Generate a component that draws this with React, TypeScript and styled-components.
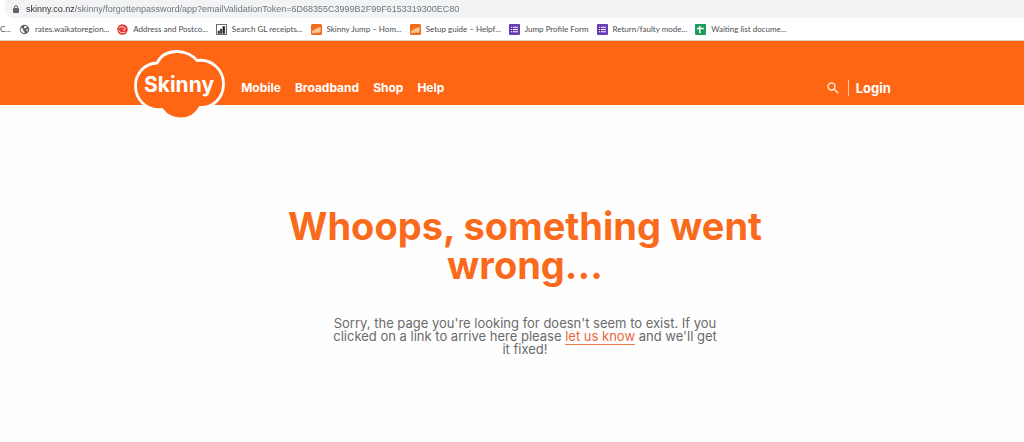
import React from "react";
import styled, { createGlobalStyle } from "styled-components";

const Global = createGlobalStyle`
  * { box-sizing: border-box; }
  body { margin: 0; background: #fefefe; font-family: Inter, "Liberation Sans", sans-serif; }
  a { color: inherit; text-decoration: none; }
  svg { display: block; flex: none; }
`;

const AddressRow = styled.div`
  background: #fff;
  padding-left: 5px;
`;
const AddressBox = styled.label`
  display: flex;
  align-items: center;
  gap: 7px;
  height: 18px;
  padding: 0 8px;
  border-radius: 0 0 0 9px;
  background: #f1f3f4;
  color: #5f6368;
`;
const Url = styled.input`
  flex: 1;
  min-width: 0;
  border: 0;
  padding: 0;
  outline: 0;
  color: #6f7377;
  font: 9px "Liberation Sans", Arial, sans-serif;
  background: linear-gradient(90deg, #27292c 48px, #6a6e72 48px);
  background-clip: text;
  -webkit-text-fill-color: transparent;
`;
const Bookmarks = styled.nav`
  display: flex;
  align-items: center;
  gap: 8px;
  height: 23px;
  overflow: hidden;
  background: #fff;
  border-bottom: 1px solid #e3cfc4;
`;
const Bookmark = styled.a`
  display: flex;
  align-items: center;
  gap: 5px;
  font: 8px Lato, "Noto Sans", sans-serif;
  color: #4a4d51;
  white-space: nowrap;
`;

const Header = styled.header`
  background: #ff6614;
  height: 64px;
`;
const HeaderInner = styled.div`
  display: flex;
  width: 74%;
  margin: 0 auto;
  align-items: flex-start;
  padding-top: 8px;
`;
const Nav = styled.nav`
  display: flex;
  gap: 14px;
  margin-left: 15px;
  padding-top: 31px;
  flex: 1;
`;
const NavLink = styled.a`
  color: #fff;
  font-size: 12px;
  line-height: 16px;
  font-weight: 700;
`;
const Tools = styled.div`
  display: flex;
  align-items: center;
  padding-top: 31px;
`;
const SearchButton = styled.button`
  border: 0;
  padding: 0 9px 0 0;
  background: none;
  color: #ffe6d8;
  display: flex;
`;
const LoginLink = styled(NavLink)`
  border-left: 1px solid #ffc7a6;
  padding-left: 7px;
  font-size: 13px;
`;

const Main = styled.main`
  display: flex;
  flex-direction: column;
  align-items: center;
  padding: 102px 0 80px 26px;
  text-align: center;
`;
const Title = styled.h1`
  margin: 0;
  max-width: 500px;
  color: #fa6a1c;
  font-size: 38px;
  line-height: 39px;
  font-weight: 700;
`;
const Message = styled.p`
  margin: 32px 0 0;
  max-width: 390px;
  color: #6a6a6a;
  font-size: 13px;
  line-height: 13px;
`;
const InlineLink = styled.a`
  color: #e8693a;
  border-bottom: 1px solid #f07a44;
`;

const LockIcon = () => (
  <svg width="6" height="9" viewBox="0 0 6 9" aria-hidden="true">
    <rect y="3" width="6" height="5" rx="1" fill="currentColor" />
    <path d="M1.5 3.5V2.2a1.5 1.5 0 0 1 3 0v1.3" fill="none" stroke="currentColor" />
  </svg>
);

const GlobeIcon = () => (
  <svg width="11" height="11" viewBox="0 0 11 11" aria-hidden="true">
    <circle cx="5.5" cy="5.5" r="4.7" fill="#5f6368" />
    <path d="M2 3.4 4.2 5.2 4 6.6 5.6 8v1.2C3 9 1.6 7.4 1.7 5.2ZM5.2 1.8 8 2.4 7 4 5.3 4.2ZM7 5.6 9.2 5.5 8.2 7.6Z" fill="#fff" />
  </svg>
);

const PostIcon = () => (
  <svg width="11" height="11" viewBox="0 0 11 11" aria-hidden="true">
    <circle cx="5.5" cy="5.5" r="5.2" fill="#e0342f" />
    <path d="M2 4.2C3.6 2.2 7.6 2.3 8.2 4.6 8.5 6.2 6.4 6.6 5.6 5.4M1.6 6.2C2.6 8.6 5.6 9.4 8.4 8" fill="none" stroke="#fff" />
  </svg>
);

const ChartIcon = () => (
  <svg width="11" height="11" viewBox="0 0 11 11" aria-hidden="true">
    <rect x=".5" y=".5" width="10" height="10" fill="#fff" stroke="#6b6b6b" />
    <path d="M2 9.5V7h1.5v2.5ZM4.3 9.5V5h1.5v4.5ZM6.8 9.5V2.5h2v7Z" fill="#222" stroke="#222" strokeWidth=".4" />
  </svg>
);

const JumpIcon = () => (
  <svg width="11" height="11" viewBox="0 0 11 11" aria-hidden="true">
    <rect width="11" height="11" rx="1.5" fill="#ee6c1c" />
    <path d="M1 6.8C3.5 6.6 4.2 3.6 9.8 3.2L9.4 8.4 1.2 9.2Z" fill="#ffc58e" />
  </svg>
);

const FormIcon = () => (
  <svg width="11" height="11" viewBox="0 0 11 11" aria-hidden="true">
    <rect width="11" height="11" rx="1" fill="#673ab7" />
    <path d="M2 3.2h1.2M4 3.2h5M2 5.5h1.2M4 5.5h5M2 7.8h1.2M4 7.8h5" stroke="#fff" strokeWidth="1.1" />
  </svg>
);

const SheetIcon = () => (
  <svg width="11" height="11" viewBox="0 0 11 11" aria-hidden="true">
    <rect width="11" height="11" rx="1" fill="#1e9e5a" />
    <path d="M2 4.5h7M4.8 2v7.2" stroke="#fff" strokeWidth="1.4" />
  </svg>
);

const SearchIcon = () => (
  <svg width="12" height="12" viewBox="0 0 12 12" aria-hidden="true">
    <circle cx="4.5" cy="4.5" r="3.5" fill="none" stroke="currentColor" strokeWidth="1.4" />
    <path d="m7.2 7.2 4 4" stroke="currentColor" strokeWidth="1.6" />
  </svg>
);

const Logo = () => (
  <svg width="93" height="71" viewBox="133 49 93 71" role="img" aria-label="Skinny">
    <path
      d="M157 63C161 55 169 51.5 177 51.5C185 51.5 193 55 197 60.5C212 58.5 223.5 70 223.5 84C223.5 97 214 108 200 107.5C196 115 189 119 181 119C173 119 166 115 162 109.5C146 111 135.5 99 135.5 86C135.5 73 145 63.5 157 63Z"
      fill="#ff6614"
      stroke="#fefefe"
      strokeWidth="2.8"
      strokeLinejoin="round"
    />
    <text x="179" y="92" textAnchor="middle" fill="#fff" fontSize="21" fontWeight="700">
      Skinny
    </text>
  </svg>
);

const bookmarks: { label: string; Icon?: React.FC }[] = [
  { label: "C..." },
  { label: "rates.waikatoregion...", Icon: GlobeIcon },
  { label: "Address and Postco...", Icon: PostIcon },
  { label: "Search GL receipts...", Icon: ChartIcon },
  { label: "Skinny Jump – Hom...", Icon: JumpIcon },
  { label: "Setup guide – Helpf...", Icon: JumpIcon },
  { label: "Jump Profile Form", Icon: FormIcon },
  { label: "Return/faulty mode...", Icon: FormIcon },
  { label: "Waiting list docume...", Icon: SheetIcon },
];

export default function App() {
  return (
    <>
      <Global />
      <AddressRow>
        <AddressBox>
          <LockIcon />
          <Url
            aria-label="Address"
            readOnly
            value="skinny.co.nz/skinny/forgottenpassword/app?emailValidationToken=6D68355C3999B2F99F6153319300EC80"
          />
        </AddressBox>
      </AddressRow>
      <Bookmarks aria-label="Bookmarks">
        {bookmarks.map(({ label, Icon }) => (
          <Bookmark href="#" key={label}>
            {Icon && <Icon />}
            {label}
          </Bookmark>
        ))}
      </Bookmarks>
      <Header>
        <HeaderInner>
          <a href="#"><Logo /></a>
          <Nav>
            <NavLink href="#">Mobile</NavLink>
            <NavLink href="#">Broadband</NavLink>
            <NavLink href="#">Shop</NavLink>
            <NavLink href="#">Help</NavLink>
          </Nav>
          <Tools>
            <SearchButton aria-label="Search"><SearchIcon /></SearchButton>
            <LoginLink href="#">Login</LoginLink>
          </Tools>
        </HeaderInner>
      </Header>
      <Main>
        <Title>Whoops, something went wrong...</Title>
        <Message>
          Sorry, the page you're looking for doesn't seem to exist. If you clicked on a link to arrive here please{" "}
          <InlineLink href="#">let us know</InlineLink> and we'll get it fixed!
        </Message>
      </Main>
    </>
  );
}
